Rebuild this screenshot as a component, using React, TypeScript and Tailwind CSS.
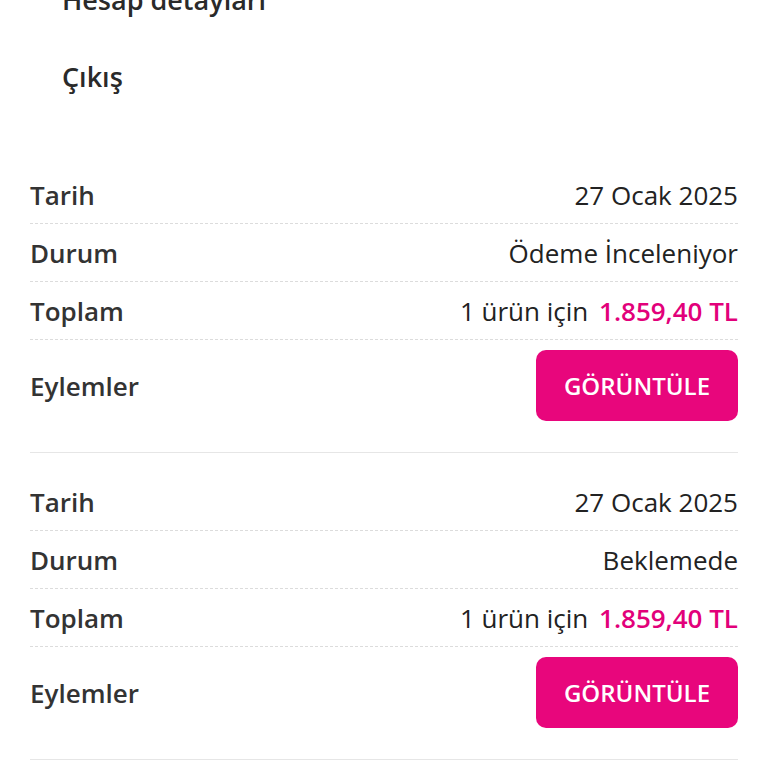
const orders = [
  { date: '27 Ocak 2025', status: 'Ödeme İnceleniyor', count: 1, total: '1.859,40 TL' },
  { date: '27 Ocak 2025', status: 'Beklemede', count: 1, total: '1.859,40 TL' },
]

function Row({ label, children }: { label: string; children: React.ReactNode }) {
  return (
    <div className="flex h-[58px] items-center justify-between border-b border-dashed border-[#dcdcdc]">
      <span className="font-semibold text-[#333333]">{label}</span>
      <span className="text-[#222222]">{children}</span>
    </div>
  )
}

export default function App() {
  return (
    <div className="min-h-[768px] bg-white font-['Open_Sans',sans-serif] text-[26px] leading-[36px]">
      <ul className="mt-[-39px] mb-[31px] pl-[62px] text-[27px] font-semibold text-[#2a2a2a]">
        <li className="flex h-[77px] items-center">Hesap detayları</li>
        <li className="flex h-[77px] items-center">Çıkış</li>
      </ul>

      <div className="px-[30px]">
        {orders.map((o, i) => (
          <div key={i} className="border-b border-[#e6e6e6] pt-5 pb-[21px]">
            <Row label="Tarih">{o.date}</Row>
            <Row label="Durum">{o.status}</Row>
            <Row label="Toplam">
              {o.count} ürün için{' '}
              <span className="ml-1 font-semibold text-[#e2007a]">{o.total}</span>
            </Row>
            <div className="flex items-center justify-between py-2.5">
              <span className="font-semibold text-[#333333]">Eylemler</span>
              <button className="flex h-[71px] w-[202px] items-center justify-center rounded-[10px] bg-[#e8067c] text-[24px] font-semibold text-white">
                GÖRÜNTÜLE
              </button>
            </div>
          </div>
        ))}
      </div>
    </div>
  )
}
